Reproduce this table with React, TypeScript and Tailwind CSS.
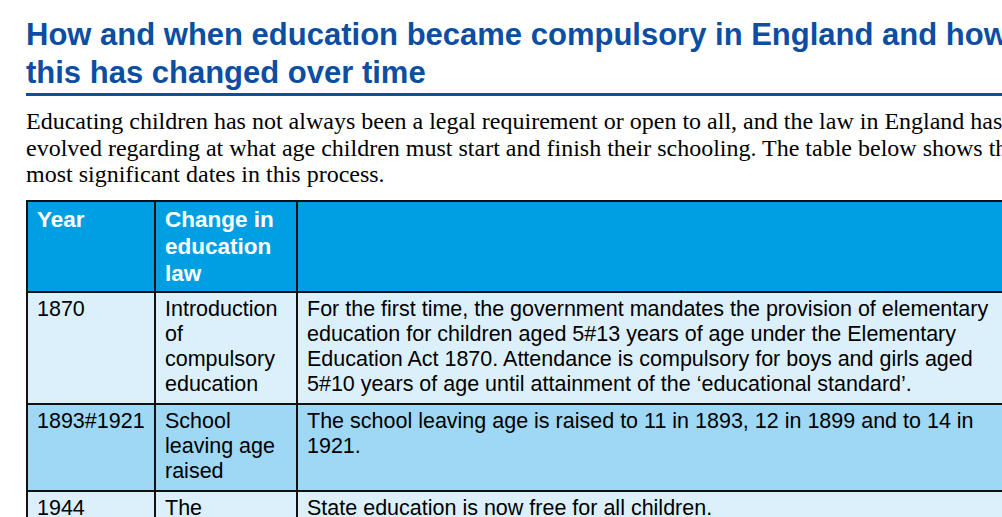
import React from "react";

const cellBase = "border-r-2 border-b-2 border-[#111] px-[9px]";
const bodyText = "text-[21.5px] leading-[25px] text-black";

export default function App() {
  return (
    <div className="w-[1002px] h-[517px] overflow-hidden bg-white">
      <div className="w-[1026px] pl-[26px]" style={{ fontFamily: '"Liberation Sans", Arial, sans-serif' }}>
        <h1 className="mt-[16px] w-[1000px] border-b-[3px] border-[#0b4ea2] pb-[1px] text-[31px] font-bold leading-[38px] text-[#0b4ea2]">
          How and when education became compulsory in England and how this has changed over time
        </h1>
        <p
          className="mt-[12px] w-[1000px] text-[24px] leading-[26.7px] text-black"
          style={{ fontFamily: '"Liberation Serif", "Times New Roman", serif' }}
        >
          Educating children has not always been a legal requirement or open to all, and the law in England has evolved regarding at what age children must start and finish their schooling. The table below shows the most significant dates in this process.
        </p>
        <div className="mt-[12px] grid w-[1000px] grid-cols-[128px_142px_1fr] border-l-2 border-t-2 border-[#111]">
          {/* header */}
          <div className={`${cellBase} bg-[#009fe3] pt-[5px] pb-[4px] text-[22.5px] font-bold leading-[26.7px] text-white`}>Year</div>
          <div className={`${cellBase} bg-[#009fe3] pt-[5px] pb-[4px] text-[22.5px] font-bold leading-[26.7px] text-white`}>
            Change in education law
          </div>
          <div className={`${cellBase} bg-[#009fe3] pt-[5px] pb-[4px] text-[22.5px] font-bold leading-[26.7px] text-white`}></div>

          {/* row 1 */}
          <div className={`${cellBase} ${bodyText} bg-[#dcf0fb] pt-[4px] pb-[6px]`}>1870</div>
          <div className={`${cellBase} ${bodyText} bg-[#dcf0fb] pt-[4px] pb-[6px]`}>Introduction of compulsory education</div>
          <div className={`${cellBase} ${bodyText} bg-[#dcf0fb] pt-[4px] pb-[6px] pr-[10px]`}>
            For the first time, the government mandates the provision of elementary education for children aged 5#13 years of age under the Elementary Education Act 1870. Attendance is compulsory for boys and girls aged 5#10 years of age until attainment of the ‘educational standard’.
          </div>

          {/* row 2 */}
          <div className={`${cellBase} ${bodyText} bg-[#9fd8f5] pt-[4px] pb-[6px]`}>1893#1921</div>
          <div className={`${cellBase} ${bodyText} bg-[#9fd8f5] pt-[4px] pb-[6px]`}>School leaving age raised</div>
          <div className={`${cellBase} ${bodyText} bg-[#9fd8f5] pt-[4px] pb-[6px] pr-[10px]`}>
            The school leaving age is raised to 11 in 1893, 12 in 1899 and to 14 in 1921.
          </div>

          {/* row 3 */}
          <div className={`${cellBase} ${bodyText} bg-[#dcf0fb] pt-[4px] pb-[6px]`}>1944</div>
          <div className={`${cellBase} ${bodyText} bg-[#dcf0fb] pt-[4px] pb-[6px]`}>The Education Act</div>
          <div className={`${cellBase} ${bodyText} bg-[#dcf0fb] pt-[4px] pb-[6px] pr-[10px]`}>
            State education is now free for all children.
          </div>
        </div>
      </div>
    </div>
  );
}
